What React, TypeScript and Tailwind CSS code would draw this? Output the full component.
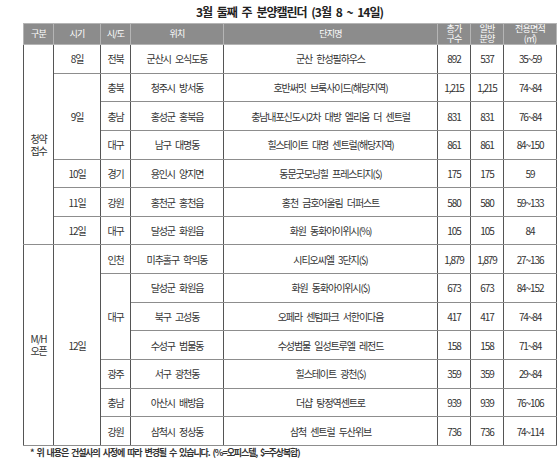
import React from 'react'

type Row = {
  month?: { text: string; span: number }
  area?: { text: string; span: number }
  place: string
  name: string
  total: string
  sale: string
  size: string
}

const GROUPS: { label: string[]; rows: Row[] }[] = [
  {
    label: ['청약', '접수'],
    rows: [
      { month: { text: '8일', span: 1 }, area: { text: '전북', span: 1 }, place: '군산시 오식도동', name: '군산 한성필하우스', total: '892', sale: '537', size: '35~59' },
      { month: { text: '9일', span: 3 }, area: { text: '충북', span: 1 }, place: '청주시 방서동', name: '호반써밋 브룩사이드(해당지역)', total: '1,215', sale: '1,215', size: '74~84' },
      { area: { text: '충남', span: 1 }, place: '홍성군 홍북읍', name: '충남내포신도시2차 대방 엘리움 더 센트럴', total: '831', sale: '831', size: '76~84' },
      { area: { text: '대구', span: 1 }, place: '남구 대명동', name: '힐스테이트 대명 센트럴(해당지역)', total: '861', sale: '861', size: '84~150' },
      { month: { text: '10일', span: 1 }, area: { text: '경기', span: 1 }, place: '용인시 양지면', name: '동문굿모닝힐 프레스티지($)', total: '175', sale: '175', size: '59' },
      { month: { text: '11일', span: 1 }, area: { text: '강원', span: 1 }, place: '홍천군 홍천읍', name: '홍천 금호어울림 더퍼스트', total: '580', sale: '580', size: '59~133' },
      { month: { text: '12일', span: 1 }, area: { text: '대구', span: 1 }, place: '달성군 화원읍', name: '화원 동화아이위시(%)', total: '105', sale: '105', size: '84' },
    ],
  },
  {
    label: ['M/H', '오픈'],
    rows: [
      { month: { text: '12일', span: 7 }, area: { text: '인천', span: 1 }, place: '미추홀구 학익동', name: '시티오씨엘 3단지($)', total: '1,879', sale: '1,879', size: '27~136' },
      { area: { text: '대구', span: 3 }, place: '달성군 화원읍', name: '화원 동화아이위시($)', total: '673', sale: '673', size: '84~152' },
      { place: '북구 고성동', name: '오페라 센텀파크 서한이다음', total: '417', sale: '417', size: '74~84' },
      { place: '수성구 범물동', name: '수성범물 일성트루엘 레전드', total: '158', sale: '158', size: '71~84' },
      { area: { text: '광주', span: 1 }, place: '서구 광천동', name: '힐스테이트 광천($)', total: '359', sale: '359', size: '29~84' },
      { area: { text: '충남', span: 1 }, place: '아산시 배방읍', name: '더샵 탕정역센트로', total: '939', sale: '939', size: '76~106' },
      { area: { text: '강원', span: 1 }, place: '삼척시 정상동', name: '삼척 센트럴 두산위브', total: '736', sale: '736', size: '74~114' },
    ],
  },
]

const td = 'border-x border-x-[#555] border-y border-y-[#8d8d8d] p-0 text-center align-middle'
const th = 'border border-[#b5b5b5] bg-[#8c8c8c] p-0 text-center align-middle font-normal text-white text-[9px] leading-[10px] tracking-[-0.8px]'

export default function App() {
  return (
    <div
      className="h-[460px] w-[560px] overflow-hidden bg-white text-[#333]"
      style={{ fontFamily: '"Noto Sans CJK KR", "Noto Sans", sans-serif' }}
    >
      <div className="flex h-[23px] w-[556px] items-center justify-center pl-[23px] text-[12px] font-bold tracking-[-1px] [word-spacing:3px] text-[#222]">
        3월 둘째 주 분양캘린더 (3월 8 ~ 14일)
      </div>

      <table className="ml-[23px] w-[533px] table-fixed border-collapse border border-[#555] text-[10px] tracking-[-1.1px] [word-spacing:3px]">
        <colgroup>
          <col className="w-[30px]" />
          <col className="w-[47px]" />
          <col className="w-[30px]" />
          <col className="w-[93px]" />
          <col className="w-[214px]" />
          <col className="w-[33px]" />
          <col className="w-[33px]" />
          <col className="w-[53px]" />
        </colgroup>
        <thead>
          <tr className="h-[21px]">
            <th className={th}>구분</th>
            <th className={th}>시기</th>
            <th className={th}>시/도</th>
            <th className={th}>위치</th>
            <th className={th}>단지명</th>
            <th className={th}>총가<br />구수</th>
            <th className={th}>일반<br />분양</th>
            <th className={th}>전용면적<br />(㎡)</th>
          </tr>
        </thead>
        <tbody>
          {GROUPS.map((group) =>
            group.rows.map((row, i) => (
              <tr key={group.label[0] + i} className="h-[28.65px]">
                {i === 0 && (
                  <td rowSpan={group.rows.length} className={td + ' leading-[12px]'}>
                    {group.label[0]}
                    <br />
                    {group.label[1]}
                  </td>
                )}
                {row.month && (
                  <td rowSpan={row.month.span} className={td}>
                    {row.month.text}
                  </td>
                )}
                {row.area && (
                  <td rowSpan={row.area.span} className={td}>
                    {row.area.text}
                  </td>
                )}
                <td className={td}>{row.place}</td>
                <td className={td}>{row.name}</td>
                <td className={td}>{row.total}</td>
                <td className={td}>{row.sale}</td>
                <td className={td}>{row.size}</td>
              </tr>
            ))
          )}
        </tbody>
      </table>

      <div className="pl-[30px] text-[9px] leading-[13px] font-semibold tracking-[-1.1px] [word-spacing:2px] text-[#333]">
        * 위 내용은 건설사의 사정에 따라 변경될 수 있습니다. (%=오피스텔, $=주상복합)
      </div>
    </div>
  )
}
